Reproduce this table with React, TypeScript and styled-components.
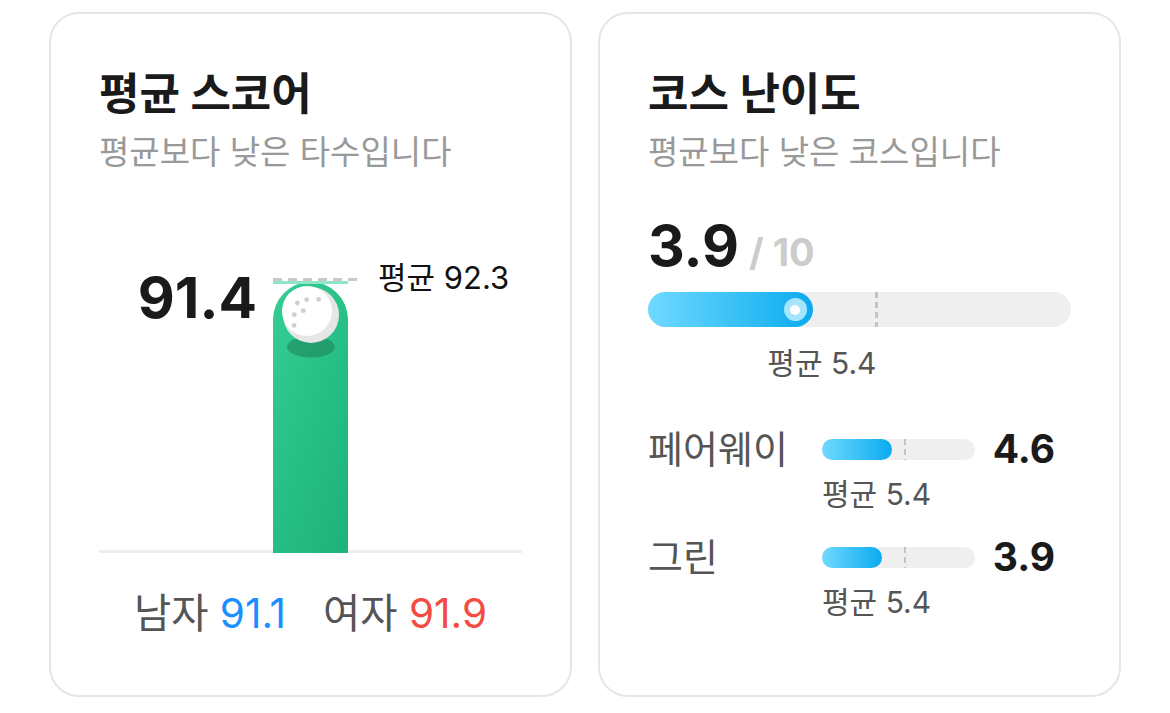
import styled, { createGlobalStyle } from 'styled-components'

const GlobalStyle = createGlobalStyle`
  html, body {
    margin: 0;
    padding: 0;
    background: #ffffff;
  }
  body {
    font-family: Inter, 'Noto Sans CJK KR', sans-serif;
    color: #1a1a1a;
  }
`

type Metric = {
  label: string
  value: number
  average: number
}

const metrics: Metric[] = [
  { label: '페어웨이', value: 4.6, average: 5.4 },
  { label: '그린', value: 3.9, average: 5.4 },
]

const GolfBall = () => (
  <BallSvg width="75" height="80" viewBox="0 0 75 80">
    <ellipse cx="38" cy="65" rx="24" ry="10.5" fill="rgba(20, 90, 55, 0.35)" />
    <circle cx="38" cy="33" r="28" fill="#e6e6e6" />
    <circle cx="34" cy="29" r="25" fill="#ffffff" />
    <g fill="#cfcfcf">
      <circle cx="24.3" cy="21" r="2.4" />
      <circle cx="33.7" cy="17.7" r="2.4" />
      <circle cx="45.7" cy="17.3" r="2.4" />
      <circle cx="30.3" cy="28.7" r="2.4" />
      <circle cx="21.3" cy="32.7" r="2.4" />
      <circle cx="21" cy="43.3" r="2.4" />
    </g>
  </BallSvg>
)

const ScoreCard = () => (
  <Card>
    <Title>평균 스코어</Title>
    <Subtitle>평균보다 낮은 타수입니다</Subtitle>
    <Chart>
      <Bar>
        <AverageLine />
        <AverageTick />
        <AverageLabel>평균 92.3</AverageLabel>
        <ScoreLabel>91.4</ScoreLabel>
        <GolfBall />
      </Bar>
    </Chart>
    <GenderRow>
      <Gender>
        남자 <GenderValue $color="#1a8fff">91.1</GenderValue>
      </Gender>
      <Gender>
        여자 <GenderValue $color="#f54b42">91.9</GenderValue>
      </Gender>
    </GenderRow>
  </Card>
)

const DifficultyCard = () => (
  <Card>
    <Title>코스 난이도</Title>
    <Subtitle>평균보다 낮은 코스입니다</Subtitle>
    <BigScore>
      3.9<OutOf>/ 10</OutOf>
    </BigScore>
    <Track $height={35}>
      <Fill style={{ width: `${3.9 * 10}%` }}>
        <Knob />
      </Fill>
      <Marker $wide style={{ left: `${5.4 * 10}%` }} />
    </Track>
    <MainAverage>
      <MainAverageText style={{ width: `${5.4 * 10}%` }}>평균 5.4</MainAverageText>
    </MainAverage>
    <Metrics>
      {metrics.map((m) => (
        <MetricGrid key={m.label}>
          <MetricLabel>{m.label}</MetricLabel>
          <Track $height={21}>
            <Fill style={{ width: `${m.value * 10}%` }} />
            <Marker style={{ left: `${m.average * 10}%` }} />
          </Track>
          <MetricValue>{m.value.toFixed(1)}</MetricValue>
          <span />
          <SmallAverage>평균 {m.average.toFixed(1)}</SmallAverage>
        </MetricGrid>
      ))}
    </Metrics>
  </Card>
)

const App = () => (
  <>
    <GlobalStyle />
    <Page>
      <ScoreCard />
      <DifficultyCard />
    </Page>
  </>
)

export default App

const Page = styled.div`
  display: flex;
  gap: 26px;
  padding: 12px 49px;
`

const Card = styled.div`
  box-sizing: border-box;
  width: 523px;
  height: 685px;
  border: 2px solid #e6e6e6;
  border-radius: 30px;
  padding: 56px 48px 0;
  display: flex;
  flex-direction: column;
`

const Title = styled.h2`
  margin: 0;
  font-size: 44px;
  line-height: 48px;
  font-weight: 700;
  color: #1a1a1a;
`

const Subtitle = styled.p`
  margin: 14px 0 0;
  font-size: 33px;
  line-height: 40px;
  color: #999999;
`

const Chart = styled.div`
  height: 381px;
  box-sizing: border-box;
  border-bottom: 3px solid #eeeeee;
  display: flex;
  justify-content: center;
  align-items: flex-end;
`

const Bar = styled.div`
  position: relative;
  width: 75px;
  height: 271px;
  margin-bottom: -3px;
  border-radius: 37.5px 37.5px 0 0;
  background: linear-gradient(110deg, #34cd93 0%, #1cb27a 100%);
`

const BallSvg = styled.svg`
  position: absolute;
  left: 0;
  top: 0;
  display: block;
`

const AverageLine = styled.div`
  position: absolute;
  left: 0;
  top: -4px;
  width: 90px;
  height: 3px;
  background: repeating-linear-gradient(90deg, #c9c9c9 0 9px, transparent 9px 15px);
`

const AverageTick = styled.div`
  position: absolute;
  left: 0;
  top: -1px;
  width: 75px;
  height: 3px;
  background: #8fe5c7;
`

const AverageLabel = styled.span`
  position: absolute;
  left: 105px;
  top: -24px;
  white-space: nowrap;
  font-size: 31px;
  line-height: 40px;
  color: #111111;
`

const ScoreLabel = styled.span`
  position: absolute;
  right: 91px;
  top: -17px;
  font-size: 57px;
  line-height: 66px;
  font-weight: 700;
  color: #1a1a1a;
`

const GenderRow = styled.div`
  margin-top: 36px;
  display: flex;
  justify-content: center;
  gap: 37px;
  font-size: 40.5px;
  line-height: 50px;
`

const Gender = styled.span`
  color: #555555;
`

const GenderValue = styled.span<{ $color: string }>`
  color: ${({ $color }) => $color};
`

const BigScore = styled.div`
  margin-top: 42px;
  display: flex;
  align-items: baseline;
  font-size: 57px;
  line-height: 64px;
  font-weight: 700;
  color: #1a1a1a;
`

const OutOf = styled.span`
  margin-left: 10px;
  font-size: 38px;
  color: #cccccc;
`

const Track = styled.div<{ $height: number }>`
  position: relative;
  height: ${({ $height }) => $height}px;
  border-radius: ${({ $height }) => $height / 2}px;
  background: #efefef;
  margin-top: ${({ $height }) => ($height > 30 ? 8 : 0)}px;
`

const Fill = styled.div`
  position: relative;
  height: 100%;
  border-radius: inherit;
  background: linear-gradient(90deg, #6fd9ff 0%, #0aabef 100%);
`

const Knob = styled.div`
  position: absolute;
  right: 6px;
  top: 50%;
  width: 23px;
  height: 23px;
  margin-top: -11.5px;
  border-radius: 50%;
  background: #a6e5fc;
  display: flex;
  align-items: center;
  justify-content: center;

  &::after {
    content: '';
    width: 10px;
    height: 10px;
    border-radius: 50%;
    background: #ffffff;
  }
`

const Marker = styled.div<{ $wide?: boolean }>`
  position: absolute;
  top: 0;
  bottom: 0;
  width: ${({ $wide }) => ($wide ? 3 : 2)}px;
  margin-left: -1px;
  background: repeating-linear-gradient(180deg, #c4c4c4 0 6px, transparent 6px 10px);
`

const MainAverage = styled.div`
  margin-top: 18px;
  display: flex;
`

const MainAverageText = styled.span`
  text-align: right;
  font-size: 30px;
  line-height: 36px;
  color: #555555;
`

const Metrics = styled.div`
  margin-top: 46px;
  display: flex;
  flex-direction: column;
  gap: 23px;
`

const MetricGrid = styled.div`
  display: grid;
  grid-template-columns: 174px 153px 1fr;
  grid-template-rows: 44px auto;
  row-gap: 5px;
  align-items: center;
`

const MetricLabel = styled.span`
  font-size: 38px;
  line-height: 44px;
  color: #555555;
`

const MetricValue = styled.span`
  justify-self: end;
  margin-right: 16px;
  font-size: 39px;
  line-height: 44px;
  font-weight: 700;
  color: #1a1a1a;
`

const SmallAverage = styled.span`
  white-space: nowrap;
  font-size: 30px;
  line-height: 36px;
  color: #555555;
`
